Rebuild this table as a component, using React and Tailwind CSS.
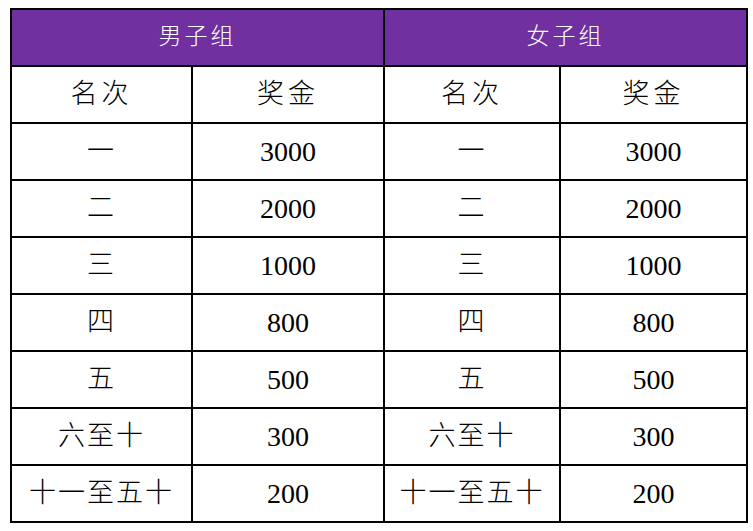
const rows = [
  ["一", "3000"],
  ["二", "2000"],
  ["三", "1000"],
  ["四", "800"],
  ["五", "500"],
  ["六至十", "300"],
  ["十一至五十", "200"],
];

function App() {
  const font = { fontFamily: '"Liberation Serif", "Noto Sans CJK SC", serif' };

  return (
    <div className="w-[753px] h-[531px] bg-white pt-[8px] pl-[10px]" style={font}>
      <table className="border-collapse border-2 border-black text-black table-fixed w-[736px]">
        <colgroup>
          <col className="w-[181px]" />
          <col className="w-[192px]" />
          <col className="w-[176px]" />
          <col className="w-[187px]" />
        </colgroup>
        <thead>
          <tr className="h-[57px] bg-[#7030a0] text-white text-[23px] tracking-[3px]">
            <th colSpan={2} className="border-2 border-black font-light">男子组</th>
            <th colSpan={2} className="border-2 border-black font-light">女子组</th>
          </tr>
        </thead>
        <tbody className="text-[27px]">
          <tr className="h-[57px]">
            <td className="border-2 border-black text-center font-light tracking-[4px]">名次</td>
            <td className="border-2 border-black text-center font-light tracking-[4px]">奖金</td>
            <td className="border-2 border-black text-center font-light tracking-[4px]">名次</td>
            <td className="border-2 border-black text-center font-light tracking-[4px]">奖金</td>
          </tr>
          {rows.map(([rank, prize]) => (
            <tr key={rank} className="h-[57px]">
              <td className="border-2 border-black text-center font-light tracking-[2px]">{rank}</td>
              <td className="border-2 border-black text-center text-[28px]">{prize}</td>
              <td className="border-2 border-black text-center font-light tracking-[2px]">{rank}</td>
              <td className="border-2 border-black text-center text-[28px]">{prize}</td>
            </tr>
          ))}
        </tbody>
      </table>
    </div>
  );
}

export default App;
